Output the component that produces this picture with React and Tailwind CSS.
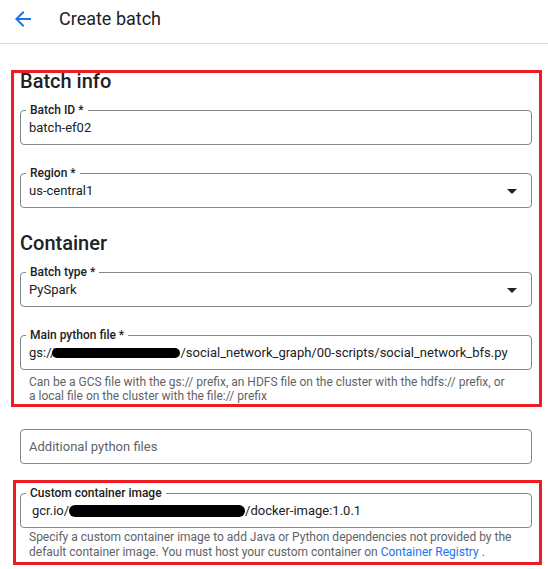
import { useState } from "react";

const ArrowBack = () => (
  <svg width="24" height="24" viewBox="0 0 24 24" fill="#1a73e8">
    <path d="M20 11H7.83l5.59-5.59L12 4l-8 8 8 8 1.41-1.41L7.83 13H20v-2z" />
  </svg>
);

const DropArrow = () => (
  <svg width="24" height="24" viewBox="0 0 24 24" fill="#202124">
    <path d="M7 10l5 5 5-5z" />
  </svg>
);

const Field = ({ label, children, select, className = "", valueClass = "pl-[8px]" }) => (
  <div
    className={`relative flex h-[35px] items-center rounded-[4px] border border-[#80868b] ${valueClass} pr-[7px] ${className}`}
  >
    {label && (
      <span className="absolute -top-[8px] left-[5px] bg-white px-[4px] text-[12px] leading-[14px] font-medium text-[#202124]">
        {label}
      </span>
    )}
    <div className="flex-1 truncate text-[13px] leading-[20px] text-[#202124]">{children}</div>
    {select && <DropArrow />}
  </div>
);

const Blob = ({ w, h }) => (
  <span
    className="inline-block rounded-full bg-black align-middle"
    style={{ width: w, height: h }}
  />
);

const App = () => {
  const [batchId] = useState("batch-ef02");

  return (
    <div className="min-h-screen w-[548px] bg-white font-['Roboto',sans-serif] text-[#202124]">
      <div className="flex h-[44px] items-center border-b border-[#dadce0] pb-[6px]">
        <div className="ml-[11px]">
          <ArrowBack />
        </div>
        <h1 className="ml-[24px] text-[18px] leading-[24px] font-normal">Create batch</h1>
      </div>

      <div className="mt-[26px] ml-[11px] w-[531px] border-[3px] border-[#ed1c24] pl-[6px] pr-[7px] pb-[1px]">
        <h2 className="text-[20px] leading-[16px] font-medium">Batch info</h2>
        <Field label="Batch ID *" className="mt-[21px]">
          {batchId}
        </Field>
        <Field label="Region *" select className="mt-[28px]">
          us-central1
        </Field>

        <h2 className="mt-[27px] text-[20px] leading-[16px] font-medium">Container</h2>
        <Field label="Batch type *" select className="mt-[21px]">
          PySpark
        </Field>
        <Field label="Main python file *" className="mt-[28px]">
          gs://
          <span className="-ml-[3px]">
            <Blob w={128} h={10} />
          </span>
          /social_network_graph/00-scripts/social_network_bfs.py
        </Field>
        <p className="mt-[5px] pl-[9px] text-[12px] leading-[14px] text-[#5f6368]">
          <span className="block whitespace-nowrap">
            Can be a GCS file with the gs:// prefix, an HDFS file on the cluster with the hdfs:// prefix, or
          </span>
          <span className="block whitespace-nowrap">a local file on the cluster with the file:// prefix</span>
        </p>
      </div>

      <div className="mt-[22px] ml-[20px] w-[512px]">
        <Field>
          <span className="text-[#5f6368]">Additional python files</span>
        </Field>
      </div>

      <div className="mt-[16px] ml-[13px] w-[529px] border-[3px] border-[#ed1c24] pl-[4px] pr-[7px] pt-[10px] pb-[2px]">
        <Field label="Custom container image" valueClass="pl-[11px]">
          gcr.io/
          <Blob w={176} h={12} />
          /docker-image:1.0.1
        </Field>
        <p className="mt-[2px] pl-[9px] text-[12px] leading-[15px] text-[#5f6368]">
          <span className="block whitespace-nowrap">
            Specify a custom container image to add Java or Python dependencies not provided by the
          </span>
          <span className="block whitespace-nowrap">
            default container image. You must host your custom container on{" "}
            <a className="text-[#1a73e8]">Container Registry</a> .
          </span>
        </p>
      </div>
    </div>
  );
};

export default App;
